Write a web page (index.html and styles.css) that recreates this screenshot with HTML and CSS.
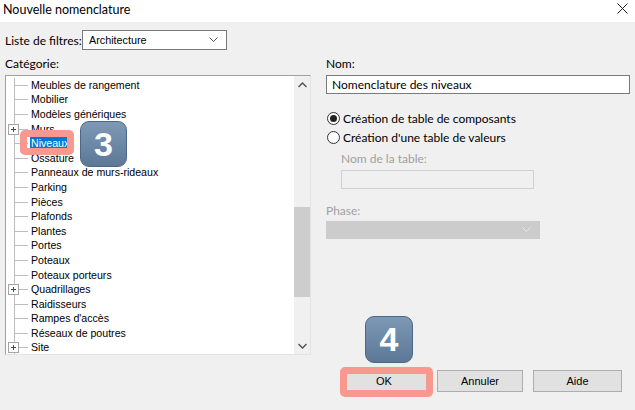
FILE: index.html
```html
<!DOCTYPE html>
<html lang="fr">
<head>
<meta charset="utf-8">
<title>Nouvelle nomenclature</title>
<link rel="stylesheet" href="styles.css">
</head>
<body>
<div class="titlebar">
  <span class="title">Nouvelle nomenclature</span>
  <svg class="close" width="11" height="11" viewBox="0 0 11 11"><path d="M0.5 0.5L10.5 10.5M10.5 0.5L0.5 10.5" stroke="#222" stroke-width="1" fill="none"/></svg>
</div>
<div class="main">
  <div class="left">
    <div class="filter-row">
      <span class="seg">Liste de filtres:</span>
      <div class="select">
        <span>Architecture</span>
        <svg width="9" height="6" viewBox="0 0 9 6"><path d="M0.5 0.5L4.5 4.5L8.5 0.5" stroke="#555" fill="none"/></svg>
      </div>
    </div>
    <div class="seg cat-label">Catégorie:</div>
    <div class="tree">
      <div class="tree-list">
        <div class="row"><span class="g"></span><span class="t">Meubles de rangement</span></div>
        <div class="row"><span class="g"></span><span class="t">Mobilier</span></div>
        <div class="row"><span class="g"></span><span class="t">Modèles génériques</span></div>
        <div class="row"><span class="g"><svg class="plus" width="11" height="11" viewBox="0 0 11 11"><rect x="0.5" y="0.5" width="10" height="10" fill="#fff" stroke="#a5a5a5"/><path d="M3 5.5H8M5.5 3V8" stroke="#334a75"/></svg></span><span class="t">Murs</span></div>
        <div class="row"><span class="g"></span><span class="t sel">Niveaux</span></div>
        <div class="row"><span class="g"></span><span class="t">Ossature</span></div>
        <div class="row"><span class="g"></span><span class="t">Panneaux de murs-rideaux</span></div>
        <div class="row"><span class="g"></span><span class="t">Parking</span></div>
        <div class="row"><span class="g"></span><span class="t">Pièces</span></div>
        <div class="row"><span class="g"></span><span class="t">Plafonds</span></div>
        <div class="row"><span class="g"></span><span class="t">Plantes</span></div>
        <div class="row"><span class="g"></span><span class="t">Portes</span></div>
        <div class="row"><span class="g"></span><span class="t">Poteaux</span></div>
        <div class="row"><span class="g"></span><span class="t">Poteaux porteurs</span></div>
        <div class="row"><span class="g"><svg class="plus" width="11" height="11" viewBox="0 0 11 11"><rect x="0.5" y="0.5" width="10" height="10" fill="#fff" stroke="#a5a5a5"/><path d="M3 5.5H8M5.5 3V8" stroke="#334a75"/></svg></span><span class="t">Quadrillages</span></div>
        <div class="row"><span class="g"></span><span class="t">Raidisseurs</span></div>
        <div class="row"><span class="g"></span><span class="t">Rampes d'accès</span></div>
        <div class="row"><span class="g"></span><span class="t">Réseaux de poutres</span></div>
        <div class="row"><span class="g"><svg class="plus" width="11" height="11" viewBox="0 0 11 11"><rect x="0.5" y="0.5" width="10" height="10" fill="#fff" stroke="#a5a5a5"/><path d="M3 5.5H8M5.5 3V8" stroke="#334a75"/></svg></span><span class="t">Site</span></div>
      </div>
      <div class="scrollbar">
        <div class="arrow"><svg width="9" height="6" viewBox="0 0 9 6"><path d="M0.5 5L4.5 1L8.5 5" stroke="#505050" stroke-width="1.4" fill="none"/></svg></div>
        <div class="track"><div class="thumb"></div></div>
        <div class="arrow"><svg width="9" height="6" viewBox="0 0 9 6"><path d="M0.5 1L4.5 5L8.5 1" stroke="#505050" stroke-width="1.4" fill="none"/></svg></div>
      </div>
    </div>
  </div>
  <div class="right">
    <div class="seg lbl">Nom:</div>
    <div class="input seg-in">Nomenclature des niveaux</div>
    <div class="radio-row first"><span class="radio on"></span><span class="seg">Création de table de composants</span></div>
    <div class="radio-row"><span class="radio"></span><span class="seg">Création d'une table de valeurs</span></div>
    <div class="seg lbl dis indent">Nom de la table:</div>
    <div class="input disabled indent-box"></div>
    <div class="seg lbl dis phase">Phase:</div>
    <div class="dselect">
      <svg width="9" height="6" viewBox="0 0 9 6"><path d="M0.5 0.5L4.5 4.5L8.5 0.5" stroke="#e8e8e8" fill="none"/></svg>
    </div>
  </div>
</div>
<div class="buttons">
  <div class="btn">OK</div>
  <div class="btn">Annuler</div>
  <div class="btn wide">Aide</div>
</div>

<div class="ring ring-niv"></div>
<div class="ring ring-ok"></div>
<div class="badge badge-3">3</div>
<div class="badge badge-4">4</div>
</body>
</html>
```
FILE: styles.css
```css
html, body {
  margin: 0;
  padding: 0;
}
body {
  width: 635px;
  height: 410px;
  overflow: hidden;
  background: #f0f0f0;
  position: relative;
  font-family: "Liberation Sans", Arial, sans-serif;
  font-size: 10.6px;
  color: #000;
}
.seg {
  font-family: Lato, "Noto Sans", sans-serif;
  font-size: 12px;
}
.titlebar {
  height: 22px;
  background: #fff;
  display: flex;
  align-items: center;
  justify-content: space-between;
  padding: 0 7px 0 3px;
}
.title {
  font-family: Lato, "Noto Sans", sans-serif;
  font-size: 12.5px;
  margin-top: -3px;
}
.close {
  margin-top: -5px;
}
.main {
  display: flex;
  padding: 8px 0 0 5px;
  height: 325px;
}
.left {
  width: 306px;
  display: flex;
  flex-direction: column;
}
.filter-row {
  display: flex;
  align-items: center;
  height: 20px;
}
.filter-row .seg {
  width: 77px;
}
.select {
  border: 1px solid #7a7a7a;
  background: #fff;
  display: flex;
  align-items: center;
  justify-content: space-between;
  padding: 0 8px 0 6px;
  box-sizing: border-box;
  width: 145px;
  height: 20px;
  font-size: 10.8px;
}
.cat-label {
  margin-top: 7px;
  line-height: 14px;
  height: 14px;
}
.tree {
  margin-top: 4px;
  height: 280px;
  box-sizing: border-box;
  border-top: 1px solid #a0a0a0;
  border-left: 1px solid #a0a0a0;
  border-right: 1px solid #e3e3e3;
  border-bottom: 1px solid #e3e3e3;
  display: flex;
  background: #fff;
}
.tree-list {
  flex: 1;
  padding-top: 2px;
  overflow: hidden;
}
.row {
  height: 14.6px;
  display: flex;
  align-items: center;
}
.g {
  width: 24px;
  height: 100%;
  flex: none;
  display: flex;
  align-items: center;
  background:
    linear-gradient(#bdbdbd, #bdbdbd) 8px 0 / 1px 100% no-repeat,
    linear-gradient(#bdbdbd, #bdbdbd) 9px 50% / 13px 1px no-repeat;
}
.plus {
  margin-left: 2px;
}
.t {
  line-height: 13px;
  padding: 0 1px;
  white-space: nowrap;
}
.t.sel {
  background: #0078d7;
  color: #fff;
}
.scrollbar {
  width: 16px;
  flex: none;
  background: #f0f0f0;
  display: flex;
  flex-direction: column;
}
.arrow {
  height: 17px;
  display: flex;
  align-items: center;
  justify-content: center;
}
.track {
  flex: 1;
  padding-top: 114px;
}
.thumb {
  height: 90px;
  background: #cdcdcd;
}
.right {
  margin-left: 15px;
  width: 304px;
  padding-top: 26px;
}
.lbl {
  line-height: 16px;
  height: 16px;
}
.input {
  margin-top: 3px;
  height: 19px;
  box-sizing: border-box;
  border: 1px solid #7a7a7a;
  background: #fff;
  width: 304px;
  padding: 0 5px;
  display: flex;
  align-items: center;
}
.seg-in {
  font-family: Lato, "Noto Sans", sans-serif;
  font-size: 12px;
}
.radio-row {
  height: 19px;
  display: flex;
  align-items: center;
  gap: 3px;
}
.radio-row.first {
  margin-top: 15px;
}
.radio {
  width: 13px;
  height: 13px;
  box-sizing: border-box;
  border: 1px solid #333;
  border-radius: 50%;
  background: #fff;
  display: flex;
  align-items: center;
  justify-content: center;
  margin-left: 1px;
}
.radio.on::after {
  content: "";
  width: 7px;
  height: 7px;
  border-radius: 50%;
  background: #222;
}
.dis {
  color: #a0a0a0;
}
.indent {
  margin-left: 15px;
  margin-top: 4px;
}
.input.disabled {
  background: #f0f0f0;
  border-color: #d0d0d0;
}
.indent-box {
  margin-left: 15px;
  width: 193px;
}
.phase {
  margin-top: 14px;
}
.dselect {
  margin-top: 2px;
  width: 214px;
  height: 18px;
  background: #cccccc;
  display: flex;
  align-items: center;
  justify-content: flex-end;
  padding-right: 9px;
  box-sizing: border-box;
}
.buttons {
  display: flex;
  justify-content: flex-end;
  gap: 10px;
  padding-right: 13px;
  margin-top: 15px;
}
.btn {
  width: 86px;
  height: 22px;
  box-sizing: border-box;
  border: 1px solid #adadad;
  background: #e1e1e1;
  display: flex;
  align-items: center;
  justify-content: center;
  font-size: 11px;
}
.btn.wide {
  width: 89px;
}
.ring {
  position: absolute;
  box-sizing: border-box;
  border: 7px solid #f8988e;
  border-radius: 5px;
}
.ring-niv {
  left: 20px;
  top: 130px;
  width: 54px;
  height: 25px;
}
.ring-ok {
  left: 340px;
  top: 367px;
  width: 93px;
  height: 30px;
}
.badge {
  position: absolute;
  width: 47px;
  height: 46px;
  box-sizing: border-box;
  border-radius: 9px;
  border: 1px solid #4d6785;
  background: linear-gradient(#7e99b5, #5c7897);
  color: #fff;
  font-family: "Liberation Sans", Arial, sans-serif;
  font-weight: bold;
  font-size: 34px;
  display: flex;
  align-items: center;
  justify-content: center;
}
.badge-3 {
  left: 80px;
  top: 121px;
}
.badge-4 {
  left: 365px;
  top: 316px;
  width: 48px;
  height: 47px;
}
```
